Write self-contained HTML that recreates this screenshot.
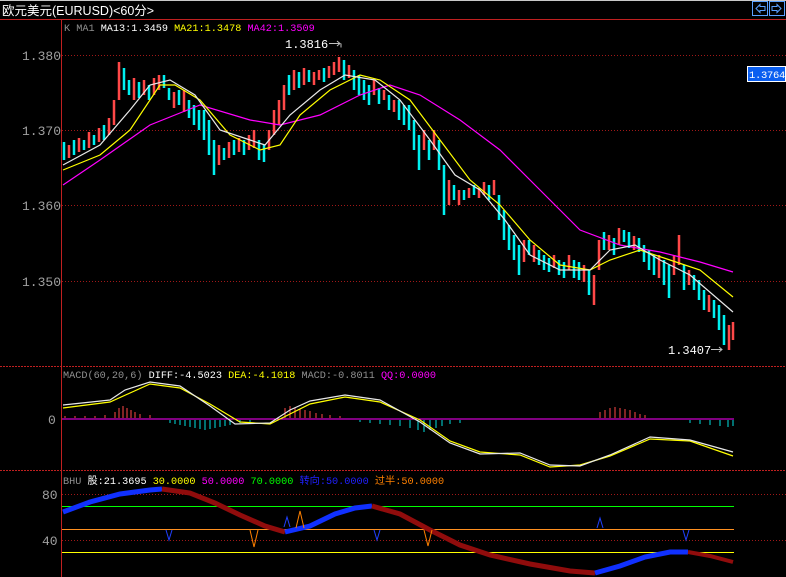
<!DOCTYPE html>
<html><head><meta charset="utf-8"><style>
html,body{margin:0;padding:0;background:#000;width:786px;height:577px;overflow:hidden}
svg{display:block}
text{font-family:"Liberation Mono","Noto Sans CJK SC",monospace;font-size:10.2px}
</style></head><body>
<svg width="786" height="577" viewBox="0 0 786 577" xmlns="http://www.w3.org/2000/svg">
<rect width="786" height="577" fill="#000"/>
<line x1="0" y1="0.5" x2="786" y2="0.5" stroke="#c8c8c8"/>
<text x="2" y="15" fill="#fff" style="font-family:'Liberation Sans','Noto Sans CJK SC',sans-serif;font-size:12.5px">欧元美元(EURUSD)&lt;60分&gt;</text>
<rect x="752.5" y="1.5" width="15" height="14" fill="#000" stroke="#5aa0ff"/>
<rect x="769.5" y="1.5" width="15" height="14" fill="#000" stroke="#5aa0ff"/>
<path d="M756 8.5l4-4v2h5v4h-5v2z" fill="none" stroke="#5aa0ff"/>
<path d="M781 8.5l-4-4v2h-5v4h5v2z" fill="none" stroke="#5aa0ff"/>
<line x1="0" y1="19.5" x2="786" y2="19.5" stroke="#c02020"/>
<line x1="61.5" y1="19" x2="61.5" y2="577" stroke="#c02020"/>
<line x1="0" y1="366.5" x2="786" y2="366.5" stroke="#c02020" stroke-dasharray="2,1"/>
<line x1="0" y1="470.5" x2="786" y2="470.5" stroke="#c02020" stroke-dasharray="2,1"/>
<g stroke="#a01818" stroke-dasharray="1,2">
<line x1="62" y1="55.5" x2="786" y2="55.5"/>
<line x1="62" y1="130.5" x2="786" y2="130.5"/>
<line x1="62" y1="205.5" x2="786" y2="205.5"/>
<line x1="62" y1="281.5" x2="786" y2="281.5"/>
<line x1="62" y1="494.5" x2="786" y2="494.5"/>
<line x1="62" y1="540.5" x2="786" y2="540.5"/>
</g>
<g fill="#a0a0a0">
<text x="22" y="60" style="font-size:13px">1.380</text>
<text x="22" y="135" style="font-size:13px">1.370</text>
<text x="22" y="210" style="font-size:13px">1.360</text>
<text x="22" y="286" style="font-size:13px">1.350</text>
<text x="48" y="424" style="font-size:13px">0</text>
<text x="42" y="499" style="font-size:13px">80</text>
<text x="42" y="545" style="font-size:13px">40</text>
</g>
<text x="64" y="31"><tspan fill="#909090">K  MA1 </tspan><tspan fill="#fff">MA13:1.3459 </tspan><tspan fill="#ffff00">MA21:1.3478 </tspan><tspan fill="#ff00ff">MA42:1.3509</tspan></text>
<path fill="none" stroke="#ff4848" stroke-width="2.5" d="M69 145V158M79 138V152M89 132V148M99 128V142M109 118V135M114 100V125M119 62V100M134 78V100M144 80V95M154 78V95M159 75V90M174 92V108M184 90V112M219 145V165M229 142V158M239 138V152M249 135V150M254 130V148M269 130V150M274 110V135M279 100V125M284 85V110M294 70V90M304 68V85M314 72V85M319 70V80M329 66V78M334 62V75M339 57V72M349 65V78M374 80V95M384 90V100M394 100V112M424 130V150M434 130V150M449 180V205M459 190V205M469 188V198M479 188V198M484 182V195M494 180V195M524 240V262M534 245V262M554 255V268M569 255V270M584 265V282M594 275V305M599 240V270M609 235V250M619 228V245M634 236V250M659 255V278M674 255V275M679 235V265M689 270V285M709 295V312M729 325V350M733 322V340"/>
<path fill="none" stroke="#00f0f0" stroke-width="2.5" d="M64 142V160M74 140V155M84 140V150M94 135V145M104 125V140M124 68V90M129 80V95M139 82V98M149 85V100M164 75V88M169 88V100M179 90V105M189 100V118M194 105V125M199 110V130M204 110V140M209 120V155M214 140V175M224 148V160M234 140V155M244 140V155M259 140V160M264 145V162M289 75V95M299 72V88M309 70V82M324 68V82M344 60V80M354 70V90M359 75V95M364 80V100M369 85V105M379 88V104M389 95V110M399 100V120M404 105V125M409 105V130M414 120V150M419 135V170M429 140V160M439 140V170M444 165V215M454 185V200M464 190V200M474 185V195M489 185V200M499 195V220M504 210V240M509 225V250M514 235V260M519 245V275M529 240V255M539 250V265M544 255V270M549 258V272M559 260V275M564 262V278M574 260V278M579 262V280M589 270V295M604 232V250M614 238V255M624 230V242M629 232V248M639 238V252M644 245V262M649 250V270M654 255V275M664 260V285M669 265V298M684 265V290M694 275V290M699 280V300M704 290V310M714 300V318M719 305V330M724 315V345"/>
<polyline fill="none" stroke="#ff00ff" stroke-width="1.2" points="63,185 100,160 150,125 200,105 250,120 280,125 320,115 360,95 390,85 420,95 460,120 500,150 540,190 580,230 620,245 660,252 700,262 733,272"/>
<polyline fill="none" stroke="#ffff00" stroke-width="1.2" points="63,170 100,155 130,130 160,85 175,85 200,100 230,135 260,150 280,145 300,115 330,90 360,75 380,80 410,100 440,140 470,180 500,205 530,240 560,265 590,270 610,260 640,250 670,260 700,270 733,297"/>
<polyline fill="none" stroke="#e8e8e8" stroke-width="1.2" points="63,165 100,145 130,110 150,85 170,80 195,95 220,130 250,140 265,145 290,115 320,90 345,75 375,80 400,100 430,140 455,175 480,190 505,220 530,255 560,270 590,270 610,250 635,245 660,260 690,275 733,312"/>
<text x="285" y="48" fill="#fff" style="font-size:12px">1.3816</text>
<path d="M329 43.5h11M337 41l3 2.5-3 2.5M341 43.5v4" fill="none" stroke="#c0c0c0"/>
<text x="668" y="354" fill="#fff" style="font-size:12px">1.3407</text>
<path d="M711 349.5h11M719 347l3 2.5-3 2.5" fill="none" stroke="#c0c0c0"/>
<rect x="747.5" y="66.5" width="38" height="15" fill="#0a5ef0" stroke="#fff"/>
<text x="749" y="78" fill="#fff" style="font-size:10.5px;letter-spacing:-0.3px">1.3764</text>
<text x="63" y="378"><tspan fill="#909090">MACD(60,20,6) </tspan><tspan fill="#fff">DIFF:-4.5023 </tspan><tspan fill="#ffff00">DEA:-4.1018 </tspan><tspan fill="#909090">MACD:-0.8011 </tspan><tspan fill="#ff00ff">QQ:0.0000</tspan></text>
<line x1="62" y1="419" x2="734" y2="419" stroke="#ff00ff"/>
<path fill="none" stroke="#ff4848" stroke-width="1" d="M65 418v-2M75 418v-2M85 418v-2M95 418v-2M105 418v-3M115 418v-6M119 418v-10M123 418v-12M127 418v-10M131 418v-8M135 418v-6M140 418v-4M150 418v-3M285 418v-10M290 418v-12M295 418v-10M300 418v-9M305 418v-8M310 418v-7M316 418v-5M322 418v-4M330 418v-3M340 418v-2M600 418v-6M605 418v-8M610 418v-10M615 418v-11M620 418v-10M625 418v-9M630 418v-8M635 418v-6M640 418v-4M645 418v-3"/>
<path fill="none" stroke="#00e0e0" stroke-width="1" d="M170 420v3M175 420v4M180 420v5M185 420v6M190 420v7M195 420v8M200 420v9M205 420v10M210 420v9M215 420v8M220 420v7M225 420v6M230 420v5M240 420v3M250 420v2M360 420v2M370 420v3M380 420v4M390 420v5M400 420v6M410 420v8M418 420v10M424 420v12M430 420v10M436 420v8M442 420v6M450 420v4M460 420v3M690 420v3M700 420v4M710 420v5M720 420v6M728 420v7M733 420v6"/>
<polyline fill="none" stroke="#ffff00" stroke-width="1.2" points="63,408 110,402 150,384 180,388 210,404 240,422 270,424 290,414 310,404 345,397 380,402 420,420 450,441 480,452 520,455 550,467 580,465 610,456 650,439 690,441 733,456"/>
<polyline fill="none" stroke="#e8e8e8" stroke-width="1.2" points="63,405 110,400 125,390 150,382 180,386 210,406 235,424 270,423 290,410 310,401 345,395 380,400 420,422 450,443 480,454 520,453 550,465 580,466 610,455 650,437 690,440 733,452"/>
<text x="63" y="484"><tspan fill="#909090">BHU </tspan><tspan fill="#fff">股:21.3695 </tspan><tspan fill="#ffff00">30.0000 </tspan><tspan fill="#ff00ff">50.0000 </tspan><tspan fill="#00ff00">70.0000 </tspan><tspan fill="#2020ff">转向:50.0000 </tspan><tspan fill="#ff8000">过半:50.0000</tspan></text>
<line x1="62" y1="506.5" x2="734" y2="506.5" stroke="#00ff00"/>
<line x1="62" y1="529.5" x2="734" y2="529.5" stroke="#ff9020"/>
<line x1="62" y1="552.5" x2="734" y2="552.5" stroke="#ffff00"/>
<polyline fill="none" stroke="#1030ff" stroke-width="5" points="63,512 90,502 120,494 150,490 162,489"/>
<polyline fill="none" stroke="#900c0c" stroke-width="5" points="162,489 190,493 215,503 240,515 265,526 285,532"/>
<polyline fill="none" stroke="#1030ff" stroke-width="5" points="285,532 310,526 335,514 355,508 372,506"/>
<polyline fill="none" stroke="#900c0c" stroke-width="5" points="372,506 400,514 430,530 460,545 490,555 530,564 570,571 595,573"/>
<polyline fill="none" stroke="#1030ff" stroke-width="5" points="595,573 620,566 645,557 670,552 688,552"/>
<polyline fill="none" stroke="#900c0c" stroke-width="4" points="688,552 710,556 733,562"/>
<g fill="none" stroke="#2040ff" stroke-width="1">
<path d="M166 530l3 10 3-10"/><path d="M374 530l3 10 3-10"/><path d="M597 528l3-10 3 10"/><path d="M683 530l3 10 3-10"/><path d="M284 527l3-10 3 10"/>
</g>
<g fill="none" stroke="#ff8000" stroke-width="1">
<path d="M250 530l4 17 4-17"/><path d="M296 528l4-17 4 17"/><path d="M424 530l4 16 4-16"/>
</g>
</svg>
</body></html>
